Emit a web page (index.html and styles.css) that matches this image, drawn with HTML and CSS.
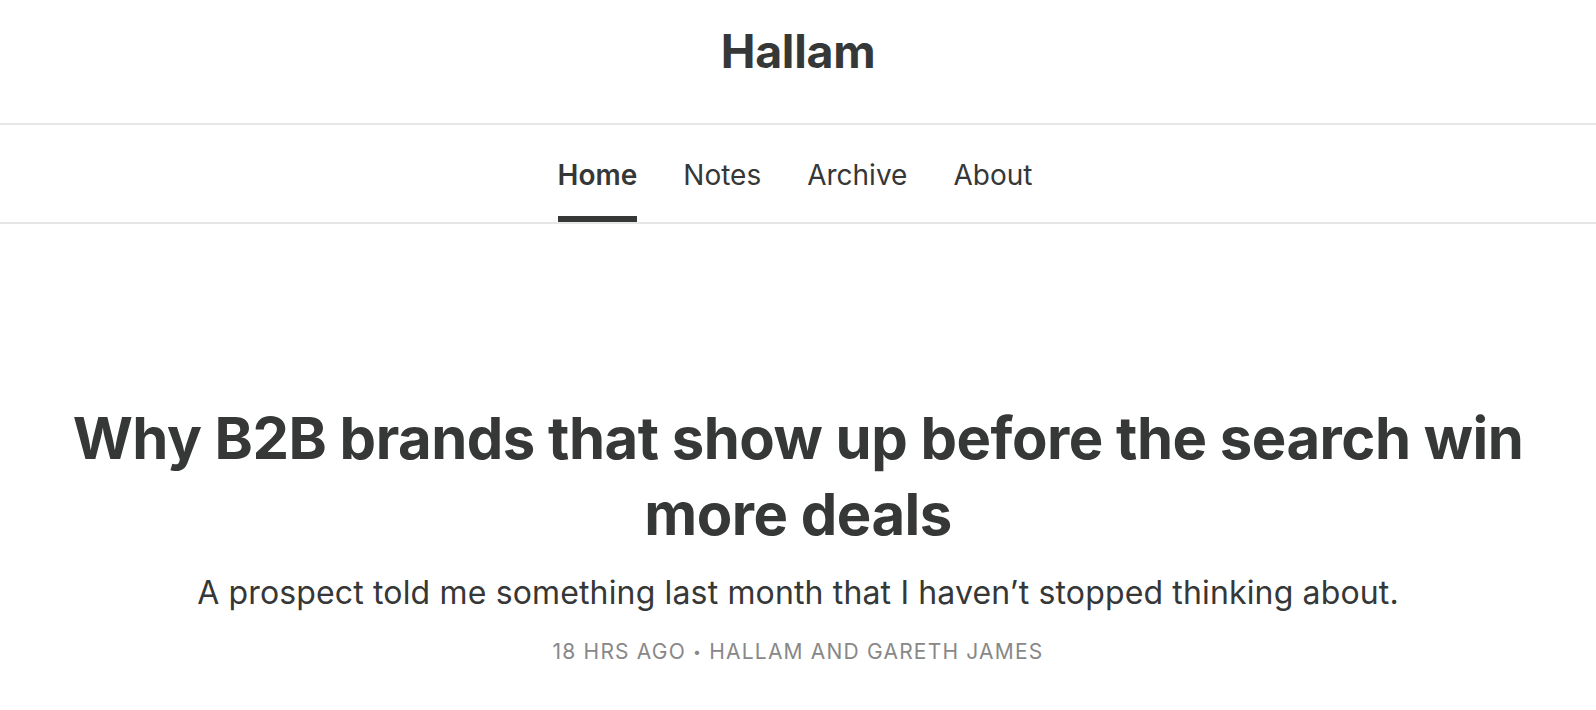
FILE: index.html
```html
<!DOCTYPE html>
<html lang="en">
<head>
<meta charset="utf-8">
<title>Hallam</title>
<link rel="stylesheet" href="styles.css">
</head>
<body>
<header class="masthead">
  <h1 class="site-title">Hallam</h1>
</header>
<nav class="tabs">
  <a class="tab active" href="#">Home</a>
  <a class="tab" href="#">Notes</a>
  <a class="tab" href="#">Archive</a>
  <a class="tab" href="#">About</a>
</nav>
<main class="post">
  <h2 class="post-title">Why B2B brands that show up before the search win more deals</h2>
  <p class="post-subtitle">A prospect told me something last month that I haven’t stopped thinking about.</p>
  <p class="post-meta">18 HRS AGO <span class="dot">•</span> HALLAM AND GARETH JAMES</p>
</main>
</body>
</html>
```
FILE: styles.css
```css
html, body {
  margin: 0;
  padding: 0;
  background: #ffffff;
}
body {
  font-family: Inter, "Noto Sans", sans-serif;
  color: #363737;
}
.masthead {
  height: 125px;
  padding-bottom: 22px;
  box-sizing: border-box;
  display: flex;
  align-items: center;
  justify-content: center;
  border-bottom: 2px solid #e6e6e6;
}
.site-title {
  margin: 0;
  font-size: 46.5px;
  font-weight: 700;
  letter-spacing: -0.3px;
}
.tabs {
  height: 97px;
  padding-right: 6px;
  display: flex;
  justify-content: center;
  gap: 46px;
  border-bottom: 2px solid #e6e6e6;
}
.tab {
  display: flex;
  align-items: center;
  font-size: 28px;
  color: #363737;
  text-decoration: none;
  border-bottom: 6px solid transparent;
  padding-top: 8px;
}
.tab.active {
  font-weight: 600;
  border-bottom-color: #363737;
}
.post {
  padding-top: 176px;
  text-align: center;
}
.post-title {
  margin: 0 auto;
  max-width: 1460px;
  font-size: 58px;
  font-weight: 700;
  line-height: 76px;
  letter-spacing: -0.5px;
}
.post-subtitle {
  margin: 21px 0 0;
  font-size: 32px;
  line-height: 40px;
  letter-spacing: 0.15px;
}
.post-meta {
  margin: 26px 0 0;
  font-size: 21px;
  letter-spacing: 1.2px;
  color: #888888;
}
.dot {
  font-size: 14px;
  vertical-align: 2px;
}
```
